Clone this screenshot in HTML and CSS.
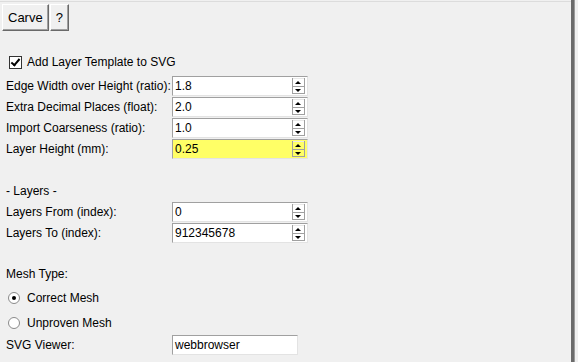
FILE: index.html
```html
<!DOCTYPE html>
<html lang="en">
<head>
    <meta charset="UTF-8">
    <title>Carve</title>
    <link rel="stylesheet" href="styles.css">
</head>
<body>
    <div class="window">
        <div class="toolbar">
            <button class="tool-btn">Carve</button>
            <button class="tool-btn">?</button>
        </div>

        <div class="check-row">
            <span class="checkbox checked"></span>
            <span>Add Layer Template to SVG</span>
        </div>

        <div class="fields">
            <label>Edge Width over Height (ratio):</label>
            <div class="spin"><span class="value">1.8</span><span class="arrows"><i class="up"></i><i class="down"></i></span></div>

            <label>Extra Decimal Places (float):</label>
            <div class="spin"><span class="value">2.0</span><span class="arrows"><i class="up"></i><i class="down"></i></span></div>

            <label>Import Coarseness (ratio):</label>
            <div class="spin"><span class="value">1.0</span><span class="arrows"><i class="up"></i><i class="down"></i></span></div>

            <label>Layer Height (mm):</label>
            <div class="spin highlight"><span class="value">0.25</span><span class="arrows"><i class="up"></i><i class="down"></i></span></div>
        </div>

        <div class="section-title">- Layers -</div>

        <div class="fields">
            <label>Layers From (index):</label>
            <div class="spin"><span class="value">0</span><span class="arrows"><i class="up"></i><i class="down"></i></span></div>

            <label>Layers To (index):</label>
            <div class="spin"><span class="value">912345678</span><span class="arrows"><i class="up"></i><i class="down"></i></span></div>
        </div>

        <div class="section-title mesh">Mesh Type:</div>

        <div class="radio-row">
            <span class="radio selected"></span>
            <span>Correct Mesh</span>
        </div>
        <div class="radio-row">
            <span class="radio"></span>
            <span>Unproven Mesh</span>
        </div>

        <div class="fields viewer">
            <label>SVG Viewer:</label>
            <div class="entry">webbrowser</div>
        </div>
    </div>
</body>
</html>
```

FILE: styles.css
```css
body {
    margin: 0;
    padding: 0;
    background-color: #f0f0f0;
    font-family: "Liberation Sans", Arial, sans-serif;
    font-size: 12px;
    color: #000;
}

.window {
    width: 574px;
    height: 362px;
    box-sizing: border-box;
    border-right: 3px solid #6b6b6b;
    box-shadow: 1px 0 0 #9a9a9a;
    overflow: hidden;
}

.toolbar {
    display: flex;
    gap: 1px;
    padding: 2px 0 0 2px;
    height: 28px;
    border-top: 1px solid #dcdcdc;
    box-sizing: border-box;
    margin-top: 1px;
}

.tool-btn {
    font-family: inherit;
    font-size: 13px;
    height: 27px;
    padding: 0 5px;
    background-color: #f0f0f0;
    border: 1px solid;
    border-color: #ffffff #696969 #696969 #ffffff;
    box-shadow: inset -1px -1px 0 #a0a0a0;
    color: #000;
}

.check-row {
    display: flex;
    align-items: center;
    gap: 5px;
    height: 20px;
    margin: 23px 0 4px 9px;
}

.checkbox {
    width: 11px;
    height: 11px;
    border: 1px solid #333;
    background: #fff;
    position: relative;
}

.checkbox.checked::after {
    content: "";
    position: absolute;
    left: 3px;
    top: 0px;
    width: 3px;
    height: 7px;
    border: solid #000;
    border-width: 0 2px 2px 0;
    transform: rotate(40deg);
}

.fields {
    display: grid;
    grid-template-columns: 166px 136px;
    grid-auto-rows: 20px;
    row-gap: 1px;
    align-items: center;
    padding-left: 6px;
}

.spin, .entry {
    height: 20px;
    box-sizing: border-box;
    border: 1px solid #a0a0a0;
    border-right-color: #e3e3e3;
    border-bottom-color: #e3e3e3;
    background: #fff;
    display: flex;
    align-items: center;
    justify-content: space-between;
    padding-left: 2px;
}

.spin.highlight {
    background: #ffff66;
}

.arrows {
    display: flex;
    flex-direction: column;
    width: 11px;
    height: 16px;
    margin-right: 2px;
    border-left: 1px solid #a0a0a0;
    border-right: 1px solid #a0a0a0;
}

.arrows i {
    flex: 1;
    position: relative;
    border-top: 1px solid #a0a0a0;
}

.arrows i.up {
    border-top-color: #e8e8e8;
}

.arrows i.down {
    border-bottom: 1px solid #a0a0a0;
}

.arrows i::after {
    content: "";
    position: absolute;
    left: 2px;
    top: 2px;
    border-left: 3px solid transparent;
    border-right: 3px solid transparent;
}

.arrows i.up::after {
    border-bottom: 3px solid #000;
}

.arrows i.down::after {
    border-top: 3px solid #000;
}

.entry {
    width: 126px;
    border-color: #a0a0a0 #e3e3e3 #e3e3e3 #a0a0a0;
}

.section-title {
    height: 21px;
    line-height: 21px;
    padding-left: 6px;
    margin-top: 22px;
}

.section-title.mesh {
    margin-top: 21px;
}

.radio-row {
    display: flex;
    align-items: center;
    gap: 7px;
    height: 25px;
    padding-left: 8px;
}

.radio {
    width: 10px;
    height: 10px;
    border-radius: 50%;
    border: 1px solid #8a8a8a;
    background: #fff;
    position: relative;
}

.radio.selected::after {
    content: "";
    position: absolute;
    left: 3px;
    top: 3px;
    width: 4px;
    height: 4px;
    border-radius: 50%;
    background: #000;
}

.viewer {
    margin-top: 0;
}
```
